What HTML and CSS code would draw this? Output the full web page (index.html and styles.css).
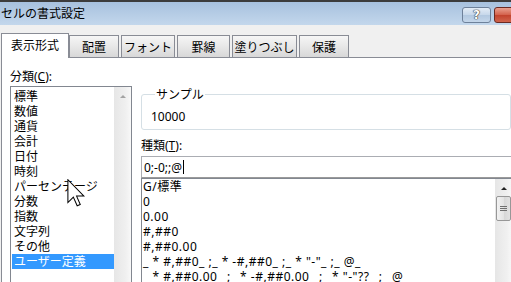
FILE: index.html
```html
<!DOCTYPE html>
<html lang="ja">
<head>
  <meta charset="UTF-8">
  <title>セルの書式設定</title>
  <link rel="stylesheet" href="styles.css">
</head>
<body>
  <div class="dialog">
    <div class="titlebar">
      <span class="title">セルの書式設定</span>
      <div class="caption-buttons">
        <span class="btn-help">?</span>
        <span class="btn-close">✕</span>
      </div>
    </div>

    <div class="tabs">
      <div class="tab active">表示形式</div>
      <div class="tab">配置</div>
      <div class="tab">フォント</div>
      <div class="tab">罫線</div>
      <div class="tab">塗りつぶし</div>
      <div class="tab">保護</div>
    </div>

    <div class="panel">
      <div class="category">
        <div class="label">分類(<u>C</u>):</div>
        <div class="listbox">
          <ul class="items">
            <li>標準</li>
            <li>数値</li>
            <li>通貨</li>
            <li>会計</li>
            <li>日付</li>
            <li>時刻</li>
            <li>パーセンテージ</li>
            <li>分数</li>
            <li>指数</li>
            <li>文字列</li>
            <li>その他</li>
            <li class="selected">ユーザー定義</li>
          </ul>
          <div class="vscroll disabled">
            <span class="arrow-up"></span>
          </div>
        </div>
      </div>

      <div class="detail">
        <fieldset class="sample">
          <legend>サンプル</legend>
          <div class="sample-value">10000</div>
        </fieldset>
        <div class="label type-label">種類(<u>T</u>):</div>
        <div class="format-input">0;-0;;@<span class="caret"></span></div>
        <div class="format-list">
          <ul class="formats">
            <li>G/標準</li>
            <li>0</li>
            <li>0.00</li>
            <li>#,##0</li>
            <li>#,##0.00</li>
            <li>_ * #,##0_ ;_ * -#,##0_ ;_ * "-"_ ;_ @_ </li>
            <li>_ * #,##0.00_ ;_ * -#,##0.00_ ;_ * "-"??_ ;_ @_ </li>
          </ul>
          <div class="vscroll">
            <span class="arrow-up dark"></span>
            <span class="thumb"><i></i><i></i><i></i></span>
          </div>
        </div>
      </div>
    </div>

    <!-- mouse pointer over the category list -->
    <svg class="pointer" width="18" height="28" viewBox="0 0 12 19">
      <polygon points="0.5,0.5 0.5,16 4.2,12.3 6.8,18.2 8.9,17.3 6.4,11.6 11.4,11.6" fill="#fff" stroke="#000" stroke-width="0.7" stroke-linejoin="miter"/>
    </svg>
  </div>
</body>
</html>
```

FILE: styles.css
```css
body {
  margin: 0;
  width: 511px;
  height: 282px;
  overflow: hidden;
  background: #f0f0f0;
  font: 12px "Noto Sans", "Noto Sans CJK JP", sans-serif;
  color: #000;
}

.dialog { position: relative; width: 543px; }

/* title bar */
.titlebar {
  height: 25px;
  box-sizing: border-box;
  border-top: 2px solid #3c3c3c;
  background: linear-gradient(#a7c1de, #c3d7ec);
  display: flex;
  align-items: center;
  justify-content: space-between;
  padding-right: 6px;
}
.title { padding-left: 1px; line-height: 15px; }
.caption-buttons { display: flex; gap: 3px; margin-top: 3px; }
.btn-help, .btn-close {
  height: 16px;
  box-sizing: border-box;
  border-radius: 3px;
  display: flex;
  align-items: center;
  justify-content: center;
  font: bold 12px "DejaVu Sans", sans-serif;
  color: #fff;
}
.btn-help {
  width: 29px;
  border: 1px solid #6e819a;
  background: linear-gradient(#e3ecf6, #c6d7ea 50%, #b2c8e0 51%, #c4d6ea);
  text-shadow: 0 0 1px #333, 0 0 1px #333, 0 0 1px #333;
}
.btn-close {
  width: 43px;
  border: 1px solid #6b2a22;
  background: linear-gradient(#e9a08f, #d3604a 50%, #c2422c 51%, #d0644c);
  font-size: 11px;
  text-shadow: 0 0 1px #4a1a12, 0 0 1px #4a1a12;
}

/* tabs */
.tabs {
  display: flex;
  align-items: flex-end;
  height: 32px;
  padding-left: 1px;
}
.tab {
  height: 22px;
  box-sizing: border-box;
  border: 1px solid #898c95;
  border-bottom: none;
  background: linear-gradient(#f6f6f6, #e6e6e6 55%, #d8d8d8);
  display: flex;
  align-items: center;
  justify-content: center;
  margin-left: 2px;
}
.tab.active {
  position: relative;
  z-index: 1;
  height: 25px;
  width: 68px;
  margin: 0 0 -1px 0;
  background: #fff;
  padding-bottom: 2px;
}
.tab:nth-child(2) { width: 50px; margin-left: 0; }
.tab:nth-child(3) { width: 54px; }
.tab:nth-child(4) { width: 53px; }
.tab:nth-child(5) { width: 65px; }
.tab:nth-child(6) { width: 50px; }

/* page body */
.panel {
  display: flex;
  gap: 9px;
  margin-left: 1px;
  height: 240px;
  background: #fff;
  border-top: 1px solid #898c95;
  border-left: 1px solid #898c95;
  padding: 11px 0 0 8px;
}
.label { line-height: 15px; margin-bottom: 2px; }

.category { width: 122px; }
.listbox {
  display: flex;
  height: 210px;
  border: 1px solid #828790;
}
.items, .formats {
  list-style: none;
  margin: 0;
  flex: 1;
  line-height: 15px;
  overflow: hidden;
}
.items li, .formats li { white-space: pre; }
.items { padding: 2px 0 0 1px; }
.items li { padding-left: 2px; }
.items li.selected { background: #3399ff; color: #fff; }
.formats li { letter-spacing: 0.5px; }

.vscroll {
  width: 17px;
  flex: none;
  background: linear-gradient(to right, #e6e6e6, #f0f0f0 70%, #f8f8f8);
  display: flex;
  flex-direction: column;
  align-items: center;
}
.arrow-up {
  margin-top: 8px;
  width: 0;
  height: 0;
  border-left: 3px solid transparent;
  border-right: 3px solid transparent;
  border-bottom: 3px solid #a3a3a3;
}
.arrow-up.dark { border-bottom-color: #222; }
.thumb {
  margin-top: 6px;
  width: 15px;
  height: 25px;
  box-sizing: border-box;
  border: 1px solid #979797;
  border-radius: 2px;
  background: linear-gradient(to right, #f2f2f2, #e4e4e4 50%, #d6d6d6 51%, #e2e2e2);
  display: flex;
  flex-direction: column;
  align-items: center;
  justify-content: center;
  gap: 1px;
}
.thumb i { display: block; width: 7px; height: 1px; background: #707070; }

/* right column */
.detail { width: 371px; flex: none; }
.sample {
  width: 370px;
  box-sizing: border-box;
  margin: 18px 0 0 0;
  padding: 7px 9px 5px;
  border: 1px solid #d5dfe5;
  border-radius: 3px;
}
.sample legend { padding: 0 1px; margin-left: 4px; line-height: 15px; }
.sample-value { line-height: 15px; }
.type-label { margin-top: 8px; margin-bottom: 3px; }
.format-input {
  height: 22px;
  box-sizing: border-box;
  border: 1px solid #abadb3;
  border-bottom-color: #9a9a9a;
  border-right: none;
  padding-left: 2px;
  display: flex;
  align-items: center;
}
.caret { width: 1px; height: 14px; background: #000; margin-left: 1px; }
.format-list {
  display: flex;
  height: 120px;
  border: 1px solid #828790;
  border-right: none;
}
.formats { padding: 0 0 0 1px; }

.pointer { position: absolute; left: 67px; top: 179px; }
```
